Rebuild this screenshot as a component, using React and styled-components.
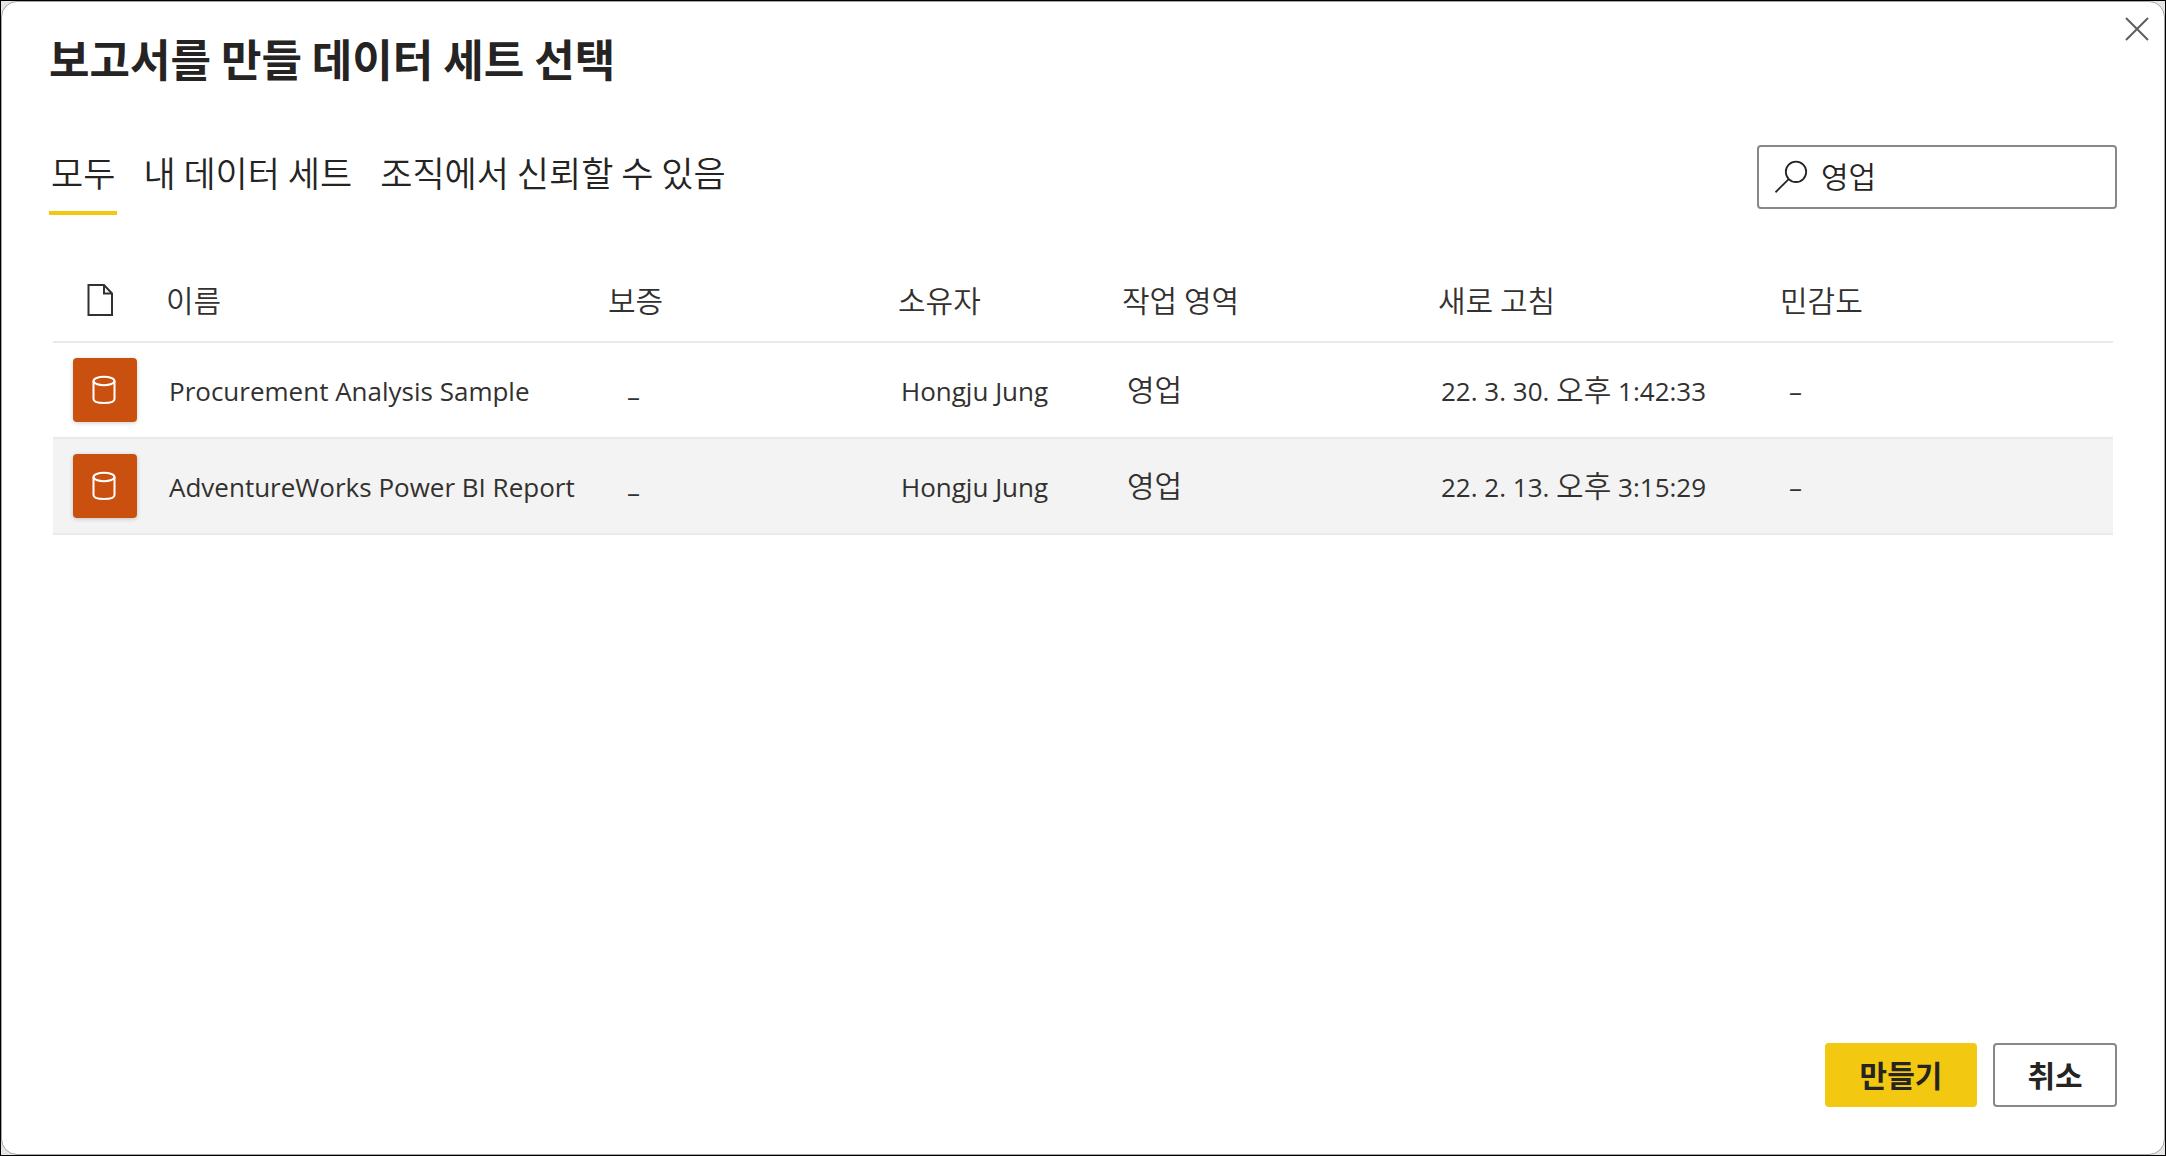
import React, { useState } from 'react'
import styled, { createGlobalStyle } from 'styled-components'

const tabs = ['모두', '내 데이터 세트', '조직에서 신뢰할 수 있음']

const datasets = [
  { id: 1, name: 'Procurement Analysis Sample', owner: 'Hongju Jung', workspace: '영업', date: '22. 3. 30.', time: '1:42:33' },
  { id: 2, name: 'AdventureWorks Power BI Report', owner: 'Hongju Jung', workspace: '영업', date: '22. 2. 13.', time: '3:15:29' },
]

function App() {
  const [tab, setTab] = useState(tabs[0])
  const [search, setSearch] = useState('영업')
  const [selected, setSelected] = useState(2)

  return (
    <Backdrop>
      <GlobalStyle />
      <Dialog role="dialog" aria-labelledby="dialog-title">
        <CloseButton aria-label="닫기">
          <svg width="24" height="24" viewBox="0 0 24 24" fill="none" stroke="#605e5c" strokeWidth="2">
            <path d="M1 1L23 23M23 1L1 23" />
          </svg>
        </CloseButton>
        <Title id="dialog-title">보고서를 만들 데이터 세트 선택</Title>
        <Toolbar>
          <Tabs role="tablist">
            {tabs.map((t) => (
              <Tab key={t} role="tab" aria-selected={t === tab} $active={t === tab} onClick={() => setTab(t)}>
                {t}
              </Tab>
            ))}
          </Tabs>
          <SearchBox>
            <svg width="34" height="34" viewBox="0 0 34 34" fill="none" stroke="#252423" strokeWidth="1.8">
              <circle cx="21" cy="11.8" r="10.2" />
              <path d="M13.7 19.1L.5 32.3" />
            </svg>
            <SearchInput aria-label="검색" value={search} onChange={(e) => setSearch(e.target.value)} />
          </SearchBox>
        </Toolbar>
        <Table>
          <colgroup>
            <Col $width={98} />
            <Col $width={442} />
            <Col $width={290} />
            <Col $width={224} />
            <Col $width={316} />
            <Col $width={342} />
            <Col $width={348} />
          </colgroup>
          <thead>
            <tr>
              <IconHead aria-label="형식">
                <svg width="28" height="34" viewBox="0 0 28 34" fill="none" stroke="#323130" strokeWidth="2">
                  <path d="M2.5 3H18L26 11.5V33H2.5Z" />
                  <path d="M18 3V11.5H26" />
                </svg>
              </IconHead>
              <Head>이름</Head>
              <Head>보증</Head>
              <Head>소유자</Head>
              <Head>작업 영역</Head>
              <Head>새로 고침</Head>
              <Head>민감도</Head>
            </tr>
          </thead>
          <tbody>
            {datasets.map((d) => (
              <Row key={d.id} $selected={d.id === selected} onClick={() => setSelected(d.id)}>
                <IconCell>
                  <Tile>
                    <svg width="26" height="30" viewBox="0 0 26 30" fill="none" stroke="#fff" strokeWidth="2">
                      <ellipse cx="12" cy="6" rx="10.5" ry="4.2" />
                      <path d="M1.5 6V24C1.5 26.5 6 28 12 28S22.5 26.5 22.5 24V6" />
                    </svg>
                  </Tile>
                </IconCell>
                <Cell>{d.name}</Cell>
                <EndorsementCell>–</EndorsementCell>
                <Cell>{d.owner}</Cell>
                <WorkspaceCell>{d.workspace}</WorkspaceCell>
                <Cell>{d.date} <Hangul>오후</Hangul> {d.time}</Cell>
                <SensitivityCell>–</SensitivityCell>
              </Row>
            ))}
          </tbody>
        </Table>
        <Footer>
          <PrimaryButton>만들기</PrimaryButton>
          <Button>취소</Button>
        </Footer>
      </Dialog>
    </Backdrop>
  )
}

const GlobalStyle = createGlobalStyle`
* {
    box-sizing: border-box;
}
body {
    margin: 0;
    font-family: 'Noto Sans CJK KR', sans-serif;
    color: #252423;
}
button, input {
    font-family: inherit;
    color: inherit;
}
svg {
    display: block;
    flex: none;
}
`

const Backdrop = styled.div`
min-height: 100vh;
display: flex;
border: 1px solid #000;
background: #e6e6e6;
`

const Dialog = styled.div`
position: relative;
flex: 1;
display: flex;
flex-direction: column;
padding: 28px 47px 47px;
background: #fff;
border: 1px solid #a6a6a6;
border-radius: 16px;
`

const CloseButton = styled.button`
position: absolute;
top: 8px;
right: 8px;
padding: 7px;
border: none;
background: none;
`

const Title = styled.h1`
margin: 0;
font-size: 44px;
line-height: 56px;
font-weight: 700;
`

const Toolbar = styled.div`
display: flex;
justify-content: space-between;
align-items: flex-start;
margin-top: 59px;
`

const Tabs = styled.div`
display: flex;
gap: 24px;
`

const Tab = styled.button`
height: 70px;
padding: 0 2px 12px;
border: none;
border-bottom: 4px solid ${(p) => (p.$active ? '#f2c811' : 'transparent')};
background: none;
font-size: 35px;
font-weight: 350;
line-height: 52px;
`

const SearchBox = styled.label`
display: flex;
align-items: center;
gap: 12px;
width: 360px;
height: 64px;
padding: 0 16px;
border: 2px solid #8a8886;
border-radius: 4px;
`

const SearchInput = styled.input`
flex: 1;
min-width: 0;
padding: 0 0 4px;
border: none;
outline: none;
background: none;
font-size: 30px;
font-weight: 350;
`

const Table = styled.table`
width: calc(100% - 8px);
margin: 44px 4px 0;
table-layout: fixed;
border-collapse: collapse;
color: #323130;
`

const Col = styled.col`
width: ${(p) => (p.$width / 2060) * 100}%;
`

const Head = styled.th`
height: 83px;
padding: 0 0 2px 15px;
border-bottom: 2px solid #eaeaea;
font-size: 30px;
font-weight: 350;
text-align: left;
`

const IconHead = styled(Head)`
padding-left: 33px;
`

const Row = styled.tr`
background: ${(p) => (p.$selected ? '#f3f3f3' : '#fff')};
`

const Cell = styled.td`
height: 96px;
padding: 2px 0 0 18px;
border-bottom: 2px solid #eaeaea;
font-family: 'Open Sans', 'Noto Sans CJK KR', sans-serif;
font-size: 26px;
line-height: 40px;
white-space: nowrap;
`

const IconCell = styled(Cell)`
padding: 0 0 0 20px;
`

const EndorsementCell = styled(Cell)`
padding: 12px 0 0 34px;
`

const WorkspaceCell = styled(Cell)`
padding: 0 0 4px 20px;
font-family: 'Noto Sans CJK KR', sans-serif;
font-size: 30px;
font-weight: 350;
`

const SensitivityCell = styled(Cell)`
padding-left: 24px;
`

const Hangul = styled.span`
font-family: 'Noto Sans CJK KR', sans-serif;
font-size: 30px;
font-weight: 350;
line-height: 30px;
`

const Tile = styled.div`
display: flex;
align-items: center;
justify-content: center;
width: 64px;
height: 64px;
border-radius: 4px;
background: #ca5010;
box-shadow: 0 1px 4px rgba(0, 0, 0, 0.2);
`

const Footer = styled.div`
display: flex;
justify-content: flex-end;
gap: 16px;
margin-top: auto;
`

const Button = styled.button`
min-width: 124px;
height: 64px;
padding: 0 32px 2px;
border: 2px solid #8a8886;
border-radius: 4px;
background: #fff;
font-size: 30px;
font-weight: 700;
`

const PrimaryButton = styled(Button)`
min-width: 152px;
border-color: #f2c811;
background: #f2c811;
`

export default App
